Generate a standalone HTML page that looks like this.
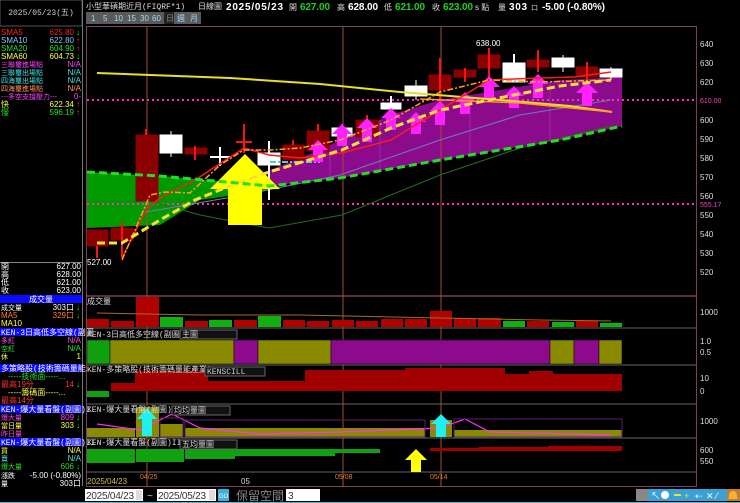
<!DOCTYPE html>
<html><head><meta charset="utf-8"><style>
html,body{margin:0;padding:0;background:#000;width:740px;height:503px;overflow:hidden}
svg{display:block}
text{font-family:"Liberation Sans","WenQuanYi Zen Hei","Noto Sans CJK TC",sans-serif;}
.m{font-family:"Liberation Mono","WenQuanYi Zen Hei",monospace;font-size:8px}
</style></head><body>
<svg width="740" height="503" viewBox="0 0 740 503" xmlns="http://www.w3.org/2000/svg">
<rect width="740" height="503" fill="#000"/>
<!-- left panel -->
<rect x="0" y="0" width="82" height="26" fill="#000" stroke="#555" stroke-width="1"/>
<text x="41" y="15" class="m" fill="#ccc" text-anchor="middle">2025/05/23(五)</text>
<line x1="82.5" y1="0" x2="82.5" y2="486" stroke="#777"/>
<g class="m">
<text x="1" y="35" fill="#ff2020">SMA5</text><text x="74" y="35" fill="#ff2020" text-anchor="end">625.80</text><text x="76" y="35" fill="#0f0">↓</text>
<text x="1" y="43" fill="#7ec8ff">SMA10</text><text x="74" y="43" fill="#7ec8ff" text-anchor="end">622.80</text><text x="76" y="43" fill="#f33">↑</text>
<text x="1" y="51" fill="#20e020">SMA20</text><text x="74" y="51" fill="#20e020" text-anchor="end">604.90</text><text x="76" y="51" fill="#f33">↑</text>
<text x="1" y="59" fill="#ffff40">SMA60</text><text x="74" y="59" fill="#ffff40" text-anchor="end">604.73</text><text x="76" y="59" fill="#0f0">↓</text>
<text x="1" y="67" fill="#ff40ff" font-size="7">三聯璽進場點</text><text x="81" y="67" fill="#ff40ff" text-anchor="end">N/A</text>
<text x="1" y="75" fill="#40e0e0" font-size="7">三聯璽出場點</text><text x="81" y="75" fill="#40e0e0" text-anchor="end">N/A</text>
<text x="1" y="83" fill="#40e0e0" font-size="7">四海璽出場點</text><text x="81" y="83" fill="#40e0e0" text-anchor="end">N/A</text>
<text x="1" y="91" fill="#ff9060" font-size="7">四海璽進場點</text><text x="81" y="91" fill="#ff9060" text-anchor="end">N/A</text>
<text x="1" y="99" fill="#ff40ff" font-size="7">---多空支撐壓力---</text><text x="81" y="99" fill="#ff40ff" text-anchor="end">0-</text>
<text x="1" y="107" fill="#ffff40">快</text><text x="74" y="107" fill="#ffff40" text-anchor="end">622.34</text><text x="76" y="107" fill="#f33">↑</text>
<text x="1" y="115" fill="#20e020">慢</text><text x="74" y="115" fill="#20e020" text-anchor="end">596.19</text><text x="76" y="115" fill="#f33">↑</text>
</g>
<line x1="0" y1="262.5" x2="82" y2="262.5" stroke="#888"/>
<g class="m" fill="#fff">
<text x="1" y="269">開</text><text x="81" y="269" text-anchor="end">627.00</text>
<text x="1" y="277">高</text><text x="81" y="277" text-anchor="end">628.00</text>
<text x="1" y="285">低</text><text x="81" y="285" text-anchor="end">621.00</text>
<text x="1" y="293">收</text><text x="81" y="293" text-anchor="end">623.00</text>
</g>
<rect x="0" y="295" width="82" height="8" fill="#0a0aff"/>
<text x="41" y="302" class="m" fill="#fff" text-anchor="middle" font-size="7">成交量</text>
<g class="m">
<text x="1" y="310" fill="#fff" font-size="7">成交量</text><text x="74" y="310" fill="#fff" text-anchor="end">303口</text><text x="76" y="310" fill="#0f0">↓</text>
<text x="1" y="318" fill="#ff8020">MA5</text><text x="74" y="318" fill="#ff8020" text-anchor="end">329口</text><text x="76" y="318" fill="#0f0">↓</text>
<text x="1" y="326" fill="#ffff40">MA10</text>
</g>
<rect x="0" y="328" width="82" height="8" fill="#0a0aff"/>
<text x="1" y="335" class="m" fill="#fff" font-size="7">KEN-3日高低多空線(副圖</text>
<g class="m">
<text x="1" y="343" fill="#ff40ff" font-size="7">多紅</text><text x="81" y="343" fill="#ff40ff" text-anchor="end">N/A</text>
<text x="1" y="351" fill="#20e020" font-size="7">空紅</text><text x="81" y="351" fill="#20e020" text-anchor="end">N/A</text>
<text x="1" y="359" fill="#ffff40" font-size="7">休</text><text x="81" y="359" fill="#ffff40" text-anchor="end">1</text>
</g>
<rect x="0" y="364" width="82" height="8" fill="#0a0aff"/>
<text x="1" y="371" class="m" fill="#fff" font-size="7">多策略股(技術籌碼量能.</text>
<g class="m" font-size="7">
<text x="8" y="379" fill="#20e020">-----技術面-----...</text>
<text x="1" y="387" fill="#ff3030">最高19分</text><text x="74" y="387" fill="#ff3030" text-anchor="end">14</text><text x="76" y="387" fill="#0f0">↓</text>
<text x="8" y="395" fill="#ffff40">-----籌碼面-----...</text>
<text x="1" y="403" fill="#ff3030">最高14分</text>
</g>
<rect x="0" y="405" width="82" height="8" fill="#0a0aff"/>
<text x="1" y="412" class="m" fill="#fff" font-size="7">KEN-爆大量看盤(副圖)I</text>
<g class="m">
<text x="1" y="420" fill="#ff40ff" font-size="7">爆大量</text><text x="74" y="420" fill="#ff40ff" text-anchor="end">809</text><text x="76" y="420" fill="#0f0">↓</text>
<text x="1" y="428" fill="#ffff40" font-size="7">當日量</text><text x="74" y="428" fill="#ffff40" text-anchor="end">303</text><text x="76" y="428" fill="#0f0">↓</text>
<text x="1" y="436" fill="#ff40ff" font-size="7">昨日量</text>
</g>
<rect x="0" y="438" width="82" height="8" fill="#0a0aff"/>
<text x="1" y="445" class="m" fill="#fff" font-size="7">KEN-爆大量看盤(副圖)II</text>
<g class="m">
<text x="1" y="453" fill="#ffff40" font-size="7">買</text><text x="81" y="453" fill="#ffff40" text-anchor="end">N/A</text>
<text x="1" y="461" fill="#40e0e0" font-size="7">賣</text><text x="81" y="461" fill="#40e0e0" text-anchor="end">N/A</text>
<text x="1" y="469" fill="#20e020" font-size="7">爆大量</text><text x="74" y="469" fill="#20e020" text-anchor="end">606</text><text x="76" y="469" fill="#0f0">↓</text>
<text x="1" y="478" fill="#fff" font-size="7">漲跌</text><text x="81" y="478" fill="#fff" text-anchor="end">-5.00 (-0.80%)</text>
<text x="1" y="486" fill="#fff" font-size="7">量</text><text x="81" y="486" fill="#fff" text-anchor="end">303口</text>
</g>

<!-- header -->
<text x="86" y="9" class="m" fill="#ddd" font-size="7.5">小型華碩期近月(FIQRF*1)</text>
<text x="198" y="9" class="m" fill="#ddd" font-size="7.5">日線圖</text>
<text x="226" y="10" font-size="10" font-weight="bold" fill="#fff" textLength="57">2025/05/23</text>
<text x="289" y="10" font-size="8" fill="#ddd">開</text><text x="300" y="10" font-size="10" font-weight="bold" fill="#20d020" textLength="30">627.00</text>
<text x="337" y="10" font-size="8" fill="#ddd">高</text><text x="348" y="10" font-size="10" font-weight="bold" fill="#fff" textLength="30">628.00</text>
<text x="384" y="10" font-size="8" fill="#ddd">低</text><text x="395" y="10" font-size="10" font-weight="bold" fill="#20d020" textLength="30">621.00</text>
<text x="432" y="10" font-size="8" fill="#ddd">收</text><text x="443" y="10" font-size="10" font-weight="bold" fill="#20d020" textLength="30">623.00</text>
<text x="475" y="10" font-size="8" fill="#ddd">s 點</text>
<text x="498" y="10" font-size="8" fill="#ddd">量</text><text x="509" y="10" font-size="10" font-weight="bold" fill="#fff" textLength="18">303</text>
<text x="531" y="10" font-size="7" fill="#ddd">口</text>
<text x="542" y="10" font-size="10" font-weight="bold" fill="#fff" textLength="63">-5.00 (-0.80%)</text>
<rect x="86" y="12" width="115" height="12" fill="#5a5a5a"/>
<g font-size="8" fill="#9fd8ff">
<text x="91" y="21">1</text><text x="103" y="21">5</text><text x="114" y="21">10</text><text x="127" y="21">15</text><text x="140" y="21">30</text><text x="152" y="21">60</text>
<rect x="164" y="12" width="10" height="12" fill="#222"/><text x="166" y="21" fill="#888">日</text>
<text x="177" y="21">週</text><text x="190" y="21">月</text>
</g>

<!-- chart frame -->
<rect x="86.5" y="26.5" width="610" height="460" fill="none" stroke="#7a4060"/>
<line x1="86" y1="296" x2="697" y2="296" stroke="#b06080"/>
<g stroke="#666"><line x1="86" y1="328" x2="697" y2="328"/><line x1="86" y1="365" x2="697" y2="365"/><line x1="86" y1="404" x2="697" y2="404"/><line x1="86" y1="438" x2="697" y2="438"/><line x1="86" y1="472" x2="697" y2="472"/></g>

<polygon points="87,172 160,176 270,186 270,190 200,200 160,225 87,228" fill="#009a00"/>
<polygon points="270,170 320,150 390,115 440,100 500,90 560,80 622,77 622,126 560,140 440,160 340,178 270,186" fill="#8c0a8c"/>
<g stroke="#b040b0" stroke-width="0.6"><line x1="330" y1="150" x2="330" y2="180"/><line x1="380" y1="120" x2="380" y2="172"/><line x1="470" y1="95" x2="470" y2="155"/><line x1="550" y1="82" x2="550" y2="140"/></g>

<line x1="87" y1="100" x2="697" y2="100" stroke="#ff30c0" stroke-width="2" stroke-dasharray="2,3"/>
<line x1="87" y1="204" x2="697" y2="204" stroke="#ff30c0" stroke-width="2" stroke-dasharray="2,3"/>
<g stroke="#a05030" stroke-width="1"><line x1="147" y1="27" x2="147" y2="486"/><line x1="343" y1="27" x2="343" y2="486"/><line x1="441" y1="27" x2="441" y2="486"/></g>

<polyline points="146,200 200,215 269,228 342,215 440,175 520,148 611,126" fill="none" stroke="#1f6f1f" stroke-width="1"/>
<polyline points="146,212 244,195 340,175 440,140 520,115 611,100" fill="none" stroke="#6d7fb8" stroke-width="1"/>

<g fill="#8b0000" stroke="#8b0000">
<rect x="87" y="230" width="21" height="16"/><rect x="111" y="228" width="22" height="12"/>
<rect x="136" y="135" width="22" height="66"/><rect x="185" y="148" width="22" height="6"/>
<rect x="283" y="145" width="21" height="15"/><rect x="307" y="131" width="22" height="20"/>
<rect x="356" y="120" width="22" height="17"/><rect x="429" y="75" width="22" height="15"/>
<rect x="454" y="70" width="22" height="7"/><rect x="478" y="55" width="22" height="13"/>
<rect x="527" y="60" width="22" height="7"/><rect x="576" y="67" width="22" height="10"/>
</g>
<g stroke="#ff1010" stroke-width="2">
<line x1="97" y1="246" x2="97" y2="258"/><line x1="122" y1="222" x2="122" y2="258"/>
<line x1="146" y1="129" x2="146" y2="135"/><line x1="195" y1="146" x2="195" y2="160"/>
<line x1="244" y1="124" x2="244" y2="153"/><line x1="236" y1="142" x2="252" y2="142"/>
<line x1="293" y1="140" x2="293" y2="145"/><line x1="318" y1="124" x2="318" y2="131"/>
<line x1="440" y1="58" x2="440" y2="103"/><line x1="489" y1="48" x2="489" y2="80"/>
<line x1="538" y1="50" x2="538" y2="72"/><line x1="587" y1="62" x2="587" y2="82"/>
<line x1="465" y1="68" x2="465" y2="82"/><line x1="367" y1="115" x2="367" y2="140"/>
</g>
<g fill="#fff" stroke="#fff">
<line x1="171" y1="131" x2="171" y2="157"/><rect x="160" y="135" width="22" height="18"/>
<line x1="220" y1="147" x2="220" y2="166" stroke-width="2"/><line x1="210" y1="157" x2="230" y2="157" stroke-width="2"/>
<line x1="269" y1="141" x2="269" y2="200" stroke-width="2"/><rect x="258" y="153" width="22" height="12"/>
<line x1="342" y1="124" x2="342" y2="140"/><rect x="332" y="128" width="20" height="8"/>
<line x1="391" y1="96" x2="391" y2="118" stroke-width="2"/><rect x="381" y="103" width="20" height="6"/>
<line x1="416" y1="80" x2="416" y2="100"/><rect x="405" y="86" width="22" height="10"/>
<line x1="514" y1="54" x2="514" y2="82" stroke-width="2"/><rect x="503" y="63" width="22" height="19"/>
<line x1="563" y1="55" x2="563" y2="72"/><rect x="552" y="58" width="22" height="9"/>
<line x1="611" y1="67" x2="611" y2="80"/><rect x="600" y="69" width="22" height="8"/>
</g>
<line x1="270" y1="162" x2="320" y2="162" stroke="#40d0e0" stroke-width="2" stroke-dasharray="6,2,2,2"/>

<g fill="#ff20ff">
<path d="M318,140 l10,10 h-5 v12 h-10 v-12 h-5 z"/>
<path d="M342,124 l10,10 h-5 v12 h-10 v-12 h-5 z"/>
<path d="M367,118 l10,10 h-5 v14 h-10 v-14 h-5 z"/>
<path d="M391,108 l10,10 h-5 v12 h-10 v-12 h-5 z"/>
<path d="M416,112 l10,10 h-5 v12 h-10 v-12 h-5 z"/>
<path d="M440,101 l10,10 h-5 v14 h-10 v-14 h-5 z"/>
<path d="M465,92 l10,10 h-5 v12 h-10 v-12 h-5 z"/>
<path d="M489,76 l11,11 h-6 v12 h-10 v-12 h-6 z"/>
<path d="M514,86 l10,10 h-5 v12 h-10 v-12 h-5 z"/>
<path d="M538,74 l10,10 h-5 v14 h-10 v-14 h-5 z"/>
<path d="M587,82 l11,11 h-6 v13 h-10 v-13 h-6 z"/>
</g>
<path d="M245,154 L280,189 L262,189 L262,225 L228,225 L228,189 L210,189 Z" fill="#ffff00"/>

<polyline points="97,73 230,78 320,84 400,92 500,100 570,106 612,112" fill="none" stroke="#e8e020" stroke-width="2"/>
<polyline points="420,99 520,103 612,112" fill="none" stroke="#ff9a20" stroke-width="1.5"/>
<polyline points="122,258 146,210 160,198 195,180 244,148 269,155 300,158 342,153 391,140 440,110 489,80 538,78 575,77 611,72" fill="none" stroke="#ff1a1a" stroke-width="1.5"/>
<polyline points="122,260 135,230 150,195 165,192 190,193 220,165 244,150 270,150 300,148 340,140 391,120 440,92 489,80 540,82 611,80" fill="none" stroke="#ffa020" stroke-width="1.5" stroke-dasharray="6,2,2,2"/>
<polyline points="97,243 122,243 160,220 195,200 232,185 269,172 342,150 391,128 440,110 514,95 560,86 611,80" fill="none" stroke="#ffe030" stroke-width="3" stroke-dasharray="8,4"/>
<polyline points="87,172 160,176 270,186 340,178 440,160 560,140 622,126" fill="none" stroke="#20e020" stroke-width="3" stroke-dasharray="8,4"/>

<text x="476" y="46" font-size="8" fill="#fff">638.00</text>
<text x="87" y="265" font-size="8" fill="#fff">527.00</text>

<g font-size="8" fill="#ddd">
<text x="700" y="47">640</text><text x="700" y="66">630</text><text x="700" y="85">620</text>
<text x="700" y="123">600</text><text x="700" y="142">590</text><text x="700" y="161">580</text>
<text x="700" y="180">570</text><text x="700" y="199">560</text><text x="700" y="218">550</text>
<text x="700" y="237">540</text><text x="700" y="256">530</text><text x="700" y="275">520</text>
<text x="700" y="315">1000</text><text x="700" y="344">1.0</text><text x="700" y="355">0.5</text>
<text x="700" y="381">10</text><text x="700" y="394">0</text><text x="700" y="424">1000</text>
<text x="700" y="453">600</text><text x="700" y="464">550</text>
</g>
<text x="700" y="103" font-size="7" fill="#ff40c0">610.00</text>
<text x="700" y="207" font-size="7" fill="#ff40c0">555.17</text>

<g fill="#b00000">
<rect x="87" y="319" width="22" height="8"/><rect x="111" y="321" width="23" height="6"/><rect x="136" y="297" width="23" height="30"/>
<rect x="185" y="321" width="23" height="6"/><rect x="234" y="320" width="23" height="7"/><rect x="283" y="320" width="22" height="7"/>
<rect x="307" y="321" width="22" height="6"/><rect x="332" y="320" width="22" height="7"/><rect x="356" y="321" width="22" height="6"/>
<rect x="381" y="319" width="22" height="8"/><rect x="405" y="319" width="22" height="8"/><rect x="430" y="311" width="22" height="16"/>
<rect x="454" y="318" width="22" height="9"/><rect x="478" y="318" width="23" height="9"/><rect x="527" y="321" width="22" height="6"/>
<rect x="576" y="321" width="22" height="6"/>
</g>
<g fill="#10b010"><rect x="160" y="317" width="23" height="10"/><rect x="209" y="320" width="23" height="7"/><rect x="258" y="316" width="23" height="11"/><rect x="503" y="321" width="22" height="6"/><rect x="552" y="322" width="22" height="5"/><rect x="600" y="323" width="22" height="4"/></g>
<polyline points="97,313 146,314 200,315 300,315 440,318 540,320 611,321" fill="none" stroke="#a07020" stroke-width="1"/>
<text x="87" y="304" class="m" fill="#ddd" font-size="7">成交量</text>

<g stroke="#000" stroke-width="0.5">
<rect x="87" y="340" width="23" height="24" fill="#10a010"/>
<rect x="110" y="340" width="124" height="24" fill="#8a8a00"/>
<rect x="234" y="340" width="24" height="24" fill="#8c0a8c"/>
<rect x="258" y="340" width="73" height="24" fill="#8a8a00"/>
<rect x="331" y="340" width="219" height="24" fill="#8c0a8c"/>
<rect x="550" y="340" width="24" height="24" fill="#8a8a00"/>
<rect x="574" y="340" width="25" height="24" fill="#8c0a8c"/>
<rect x="599" y="340" width="23" height="24" fill="#8a8a00"/>
</g>
<text x="87" y="337" class="m" fill="#ddd" font-size="7">KEN-3日高低多空線(副圖)</text>
<rect x="180" y="330" width="57" height="9" fill="#111" stroke="#666"/><text x="182" y="337" class="m" fill="#ccc" font-size="7">主圖</text>

<rect x="87" y="391" width="22" height="6" fill="#10a010"/>
<g fill="#a00000">
<rect x="111" y="383" width="24" height="8"/><rect x="135" y="371" width="73" height="20"/><rect x="208" y="381" width="97" height="10"/>
<rect x="305" y="370" width="100" height="21"/><rect x="405" y="368" width="100" height="23"/><rect x="505" y="374" width="24" height="17"/><rect x="529" y="371" width="24" height="20"/><rect x="553" y="374" width="69" height="17"/>
</g>
<text x="87" y="372" class="m" fill="#ddd" font-size="7">KEN-多策略股(技術籌碼量能產業)</text>
<rect x="205" y="367" width="60" height="9" fill="#111" stroke="#666"/><text x="207" y="374" class="m" fill="#ccc" font-size="7">KENSCILL</text>

<g fill="#8a8a00">
<rect x="87" y="428" width="48" height="9"/><rect x="136" y="407" width="23" height="30"/><rect x="160" y="424" width="23" height="13"/>
<rect x="185" y="428" width="240" height="9"/><rect x="430" y="420" width="22" height="17"/><rect x="454" y="430" width="168" height="7"/>
</g>
<polyline points="97,424 140,430 172,414 200,428 260,434 340,432 440,428 465,419 490,432 611,435" fill="none" stroke="#ff30ff" stroke-width="1.2"/>
<g fill="none" stroke="#602060"><rect x="160" y="418" width="23" height="19"/><rect x="185" y="420" width="240" height="17"/><rect x="454" y="419" width="168" height="18"/></g>
<path d="M147,408 l10,11 h-5 v17 h-10 v-17 h-5 z" fill="#20f0f0"/>
<path d="M441,414 l10,10 h-5 v13 h-10 v-13 h-5 z" fill="#20f0f0"/>
<text x="87" y="412" class="m" fill="#ddd" font-size="7">KEN-爆大量看盤(副圖)I</text>
<rect x="172" y="406" width="58" height="9" fill="#111" stroke="#666"/><text x="174" y="413" class="m" fill="#ccc" font-size="7">均均量圖</text>

<g fill="#10a010">
<rect x="87" y="449" width="48" height="14"/><rect x="136" y="449" width="48" height="13"/><rect x="185" y="449" width="50" height="10"/><rect x="235" y="449" width="100" height="7"/><rect x="335" y="449" width="45" height="4"/>
</g>
<g fill="#a00000"><rect x="430" y="448" width="48" height="3"/><rect x="478" y="447" width="70" height="4"/><rect x="548" y="446" width="74" height="5"/></g>
<path d="M416,449 l11,11 h-6 v12 h-10 v-12 h-6 z" fill="#ffff00"/>
<text x="87" y="445" class="m" fill="#ddd" font-size="7">KEN-爆大量看盤(副圖)III</text>
<rect x="180" y="440" width="57" height="9" fill="#111" stroke="#666"/><text x="182" y="447" class="m" fill="#ccc" font-size="7">五均量圖</text>

<text x="87" y="484" font-size="8" fill="#d0c040">2025/04/23</text>
<text x="140" y="479" font-size="7" fill="#e08020">04/25</text>
<text x="241" y="484" font-size="8" fill="#ddd">05</text>
<text x="335" y="479" font-size="7" fill="#e08020">05/08</text>
<text x="430" y="479" font-size="7" fill="#e08020">05/14</text>

<rect x="0" y="487" width="740" height="16" fill="#000"/>
<rect x="85" y="489" width="58" height="12" fill="#fff"/><text x="86" y="499" font-size="10" fill="#333" textLength="48">2025/04/23</text><rect x="136" y="490" width="6" height="10" fill="#ddd"/>
<text x="147" y="499" font-size="10" fill="#ccc">~</text>
<rect x="157" y="489" width="59" height="12" fill="#fff"/><text x="158" y="499" font-size="10" fill="#333" textLength="48">2025/05/23</text><rect x="209" y="490" width="6" height="10" fill="#ddd"/>
<rect x="218" y="489" width="11" height="12" fill="#3ab0e0"/><text x="219" y="498" font-size="6" fill="#fff">GO</text>
<text x="236" y="500" font-size="12" fill="#888">保留空間</text>
<rect x="286" y="489" width="34" height="12" fill="#fff"/><text x="288" y="499" font-size="10" fill="#333">3</text>
<rect x="636" y="489" width="12" height="12" fill="#888"/>
<rect x="648" y="489" width="92" height="12" fill="#3aa0d8"/>
<g font-size="9" fill="#fff"><text x="651" y="499">↖</text><circle cx="665" cy="495" r="4" fill="#fff"/><rect x="674" y="494" width="7" height="2" fill="#ffe020"/><text x="684" y="499" fill="#ffe020">+</text><text x="695" y="499">⇠</text><text x="706" y="499">✕</text><text x="716" y="499">⁄</text></g>
<rect x="727" y="489" width="13" height="12" fill="#c08030"/><path d="M733,491 c-3,0 -4,3 -4,6 l-1,2 h10 l-1,-2 c0,-3 -1,-6 -4,-6z" fill="#ffb030"/>
<line x1="0" y1="502.5" x2="740" y2="502.5" stroke="#6ab0c0"/>
</svg>
</body></html>
